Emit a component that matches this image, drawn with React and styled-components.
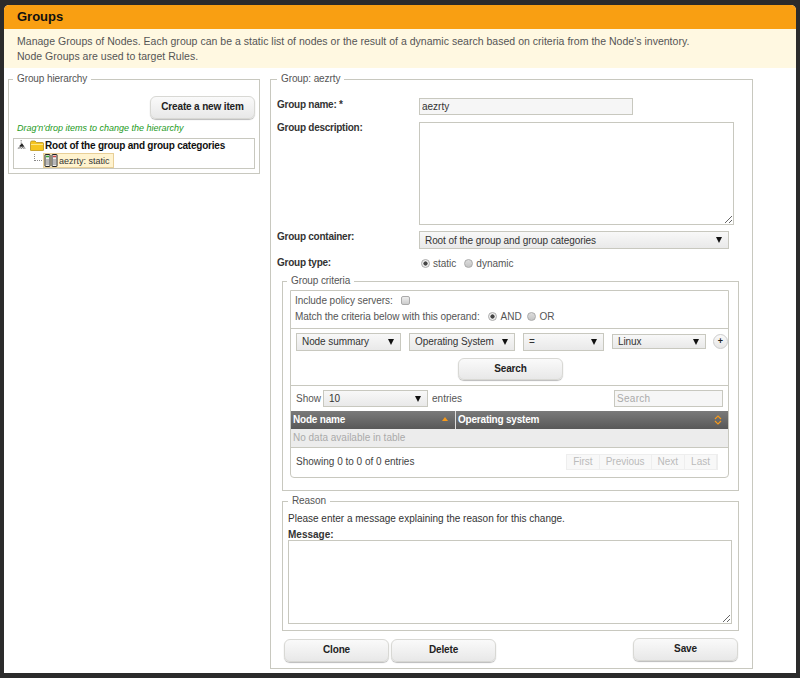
import React from "react";
import styled, { createGlobalStyle } from "styled-components";

const Global = createGlobalStyle`
  html, body { margin: 0; padding: 0; background: #2b2b2b; }
  body { font-family: "Liberation Sans", Arial, sans-serif; font-size: 11px; color: #333; }
  #root { width: 800px; height: 678px; overflow: hidden; }
  * { box-sizing: border-box; }
`;

const Panel = styled.div`
  position: relative; width: 792px; height: 668px; margin: 5px 4px; background: #fff;
  border-radius: 5px 5px 0 0; overflow: hidden;
`;
const Header = styled.h1`
  margin: 0; height: 24px; padding-left: 13px; background: #f99f12; color: #111;
  font-size: 13px; font-weight: bold; line-height: 23px;
`;
const Info = styled.div`
  height: 39px; padding: 5px 13px 0; background: #fff8e1; color: #555;
  font-size: 10.5px; line-height: 15px; letter-spacing: 0.02px;
`;
const Columns = styled.div`display: flex; align-items: flex-start; padding: 11px 0 0 4px;`;
const Fieldset = styled.section`
  position: relative; border: 1px solid #c8c8bf; width: ${p => p.$w}px; height: ${p => p.$h}px;
  margin: ${p => p.$m || 0};
`;
const Legend = styled.div`
  position: absolute; top: -8px; left: ${p => p.$left || 4}px; padding: 0 4px; background: #fff;
  color: #555; font-size: 10px; line-height: 14px; letter-spacing: -.1px;
`;
const Button = styled.button`
  display: block; width: ${p => p.$w || 105}px; height: ${p => p.$h || 23}px; padding: 0 0 2px;
  border: 1px solid #d8d8d4; border-radius: 6px; background: linear-gradient(#fafafa, #e8e8e8);
  box-shadow: 0 1px 1px #bbb; color: #222; font: bold 10px "Liberation Sans", Arial, sans-serif; letter-spacing: -.15px;
  margin: ${p => p.$m || 0};
`;
const Hint = styled.div`
  margin: 3px 0 0 8px; color: #1c9a1c; font-size: 9px; font-style: italic; line-height: 12px;
`;
const Tree = styled.div`
  position: relative; width: 242px; height: 31px; margin: 4px 0 0 4px; border: 1px solid #c8c8bf;
`;
const TreeRoot = styled.div`
  position: absolute; left: 3px; top: -1px; display: flex; align-items: center; height: 14px;
  font-weight: bold; font-size: 10px; letter-spacing: -.22px; color: #111; white-space: nowrap;
`;
const TreeChild = styled.div`
  position: absolute; left: 29px; top: 14px; height: 15px; width: 71px; display: flex; align-items: center;
  background: #fff3cf; border: 1px solid #e8cf98; color: #333; font-size: 9px; white-space: nowrap;
`;
const TreeLine = styled.div`
  position: absolute; left: 20px; top: 15px; width: 8px; height: 7px;
  border-left: 1px dotted #888; border-bottom: 1px dotted #888;
`;
const Row = styled.div`display: flex; height: ${p => p.$h}px; margin-top: ${p => p.$t || 0}px;`;
const Label = styled.label`
  width: 148px; padding-left: 6px; font-weight: bold; font-size: 10px; letter-spacing: -.25px; color: #333; line-height: 11px; padding-top: ${p => p.$pt || 0}px;
`;
const TextInput = styled.input`
  width: ${p => p.$w}px; height: ${p => p.$h || 17}px; padding: 0 2px; margin: ${p => p.$m || 0};
  border: 1px solid #c8c8bf; background: #f6f6f6; color: #333;
  font: 10px "Liberation Sans", Arial, sans-serif; outline: none;
  &::placeholder { color: #aaa; letter-spacing: .3px; }
`;
const TextArea = styled.textarea`
  display: block; width: ${p => p.$w}px; height: ${p => p.$h}px; margin: ${p => p.$m || 0}; padding: 2px;
  border: 1px solid #c8c8bf; background: #fff; outline: none;
`;
const Select = styled.div`
  display: flex; align-items: center; justify-content: space-between; flex: none;
  width: ${p => p.$w}px; height: ${p => p.$h || 18}px; padding: 0 6px 0 5px; margin: ${p => p.$m || 0};
  border: 1px solid #c8c8bf; background: linear-gradient(#f8f8f8, #e9e9e9);
  color: #333; font-size: 10px; letter-spacing: -.08px; white-space: nowrap;
  &::after { content: ""; border-left: 3px solid transparent; border-right: 3px solid transparent; border-top: 6px solid #111; }
`;
const RadioGroup = styled.div`display: flex; align-items: center; color: #555; font-size: 10px; height: ${p => p.$h || 14}px;`;
const Radio = styled.span`
  display: inline-block; width: 9px; height: 9px; border-radius: 50%; border: 1px solid #aaa; margin: ${p => p.$m || "0 3px 0 2px"};
  background: ${p => p.$on ? "radial-gradient(circle, #444 0 1.8px, #eee 2.4px)" : "linear-gradient(#ddd, #c4c4c4)"};
`;
const CriteriaBox = styled.div`
  width: 439px; height: 188px; margin: 8px 0 0 7px; border: 1px solid #c8c8bf; border-radius: 0 0 4px 4px;
`;
const TopOptions = styled.div`height: 38px; padding: 2px 0 0 4px; border-bottom: 1px solid #c8c8bf; color: #555; font-size: 10px; letter-spacing: -.05px;`;
const OptionLine = styled.div`display: flex; align-items: center; height: 14px; margin-bottom: 2px;`;
const Check = styled.span`display: inline-block; width: 9px; height: 9px; border: 1px solid #aaa; border-radius: 2px; background: linear-gradient(#eee, #ccc); margin-left: 8px;`;
const QueryRow = styled.div`display: flex; align-items: center; height: 21px; margin-top: 2px; padding-left: 5px;`;
const PlusButton = styled.div`
  width: 15px; height: 15px; margin-left: 7px; border: 1px solid #ccc; border-radius: 50%;
  background: linear-gradient(#fafafa, #e6e6e6); color: #222; font-size: 9px; font-weight: bold; line-height: 13px; text-align: center;
`;
const SearchBar = styled.div`height: 34px; border-bottom: 1px solid #c8c8bf; padding: 6px 0 0 167px;`;
const TableTools = styled.div`display: flex; align-items: center; height: 25px; padding: 0 5px; color: #555; font-size: 10px;`;
const TableHead = styled.div`
  display: flex; height: 18px; background: linear-gradient(#7a7a7a, #585858); color: #fff; font-weight: bold; font-size: 10px; letter-spacing: -.2px; line-height: 18px;
`;
const HeadCell = styled.div`
  position: relative; width: ${p => p.$w}px; padding-left: 2px; border-right: ${p => p.$div ? "1px solid #ddd" : "0"};
`;
const Sort = styled.svg`position: absolute; right: 6px; top: ${p => p.$top}px;`;
const EmptyRow = styled.div`height: 19px; background: #ececec; border-bottom: 1px solid #c8c8bf; color: #aaa; font-size: 10px; line-height: 18px; padding-left: 2px;`;
const TableFoot = styled.div`display: flex; justify-content: space-between; align-items: flex-start; padding: 6px 10px 0 5px; color: #444; font-size: 10px; line-height: 14px;`;
const FootInfo = styled.span`padding-top: 1px;`;
const Pager = styled.div`display: flex; height: 16px; border: 1px solid #eee; background: #f8f8f8;`;
const PageItem = styled.span`
  padding: 0 6px; line-height: 14px; color: #bbb; font-size: 10px; border-right: 1px solid #eee;
`;
const ReasonText = styled.div`padding: 10px 0 0 5px; height: 26px; color: #333; font-size: 10px; line-height: 14px;`;
const MessageLabel = styled.div`padding-left: 5px; font-weight: bold; font-size: 10px; color: #333; line-height: 14px; height: 12px;`;
const ActionRow = styled.div`display: flex; margin: 8px 0 0 13px;`;

const OpenNode = () => (
  <svg width="10" height="12" viewBox="0 0 12 12" style={{ marginRight: 3 }}>
    <path d="M5 0v8M2 9h8M1 10h10" stroke="#444" strokeWidth="1" strokeDasharray="1 1" fill="none" />
    <path d="M3 7l3-3 3 4H3z" fill="#222" />
  </svg>
);
const Folder = () => (
  <svg width="14" height="11" viewBox="0 0 14 11" style={{ marginRight: 1 }}>
    <path d="M.5 2.5Q.5 1 2 1h3l1.5 1.5h6q1 0 1 1V10q0 .7-.8.7H1.3Q.5 10.7.5 10z" fill="#f6c51e" stroke="#a98412" strokeWidth=".7" />
    <path d="M1 4h12v1H1z" fill="#ffe680" />
  </svg>
);
const NodeIcon = () => (
  <svg width="15" height="13" viewBox="0 0 15 13" style={{ flex: "none" }}>
    <rect x="1" y="0.5" width="5" height="12" rx=".5" fill="#eee" stroke="#222" strokeWidth="1" />
    <rect x="8" y="0.5" width="5" height="12" rx=".5" fill="#eee" stroke="#222" strokeWidth="1" />
    <path d="M2 2.5h3" stroke="#3a3" strokeWidth="1.6" />
    <path d="M9 2.5h3" stroke="#c44" strokeWidth="1.6" />
    <path d="M2 6h3M2 8h3M2 10h3M9 6h3M9 8h3M9 10h3" stroke="#666" strokeWidth=".8" />
  </svg>
);

export default function App() {
  return (
    <>
      <Global />
      <Panel>
        <Header>Groups</Header>
        <Info>
          Manage Groups of Nodes. Each group can be a static list of nodes or the result of a dynamic search based on criteria from the Node's inventory.
          <br />
          Node Groups are used to target Rules.
        </Info>
        <Columns>
          <Fieldset $w={252} $h={95}>
            <Legend>Group hierarchy</Legend>
            <Button $m="16px 0 0 141px">Create a new item</Button>
            <Hint>Drag'n'drop items to change the hierarchy</Hint>
            <Tree>
              <TreeRoot><OpenNode /><Folder />Root of the group and group categories</TreeRoot>
              <TreeLine />
              <TreeChild><NodeIcon />aezrty: static</TreeChild>
            </Tree>
          </Fieldset>
          <Fieldset $w={483} $h={590} $m="0 0 0 10px">
            <Legend $left={6}>Group: aezrty</Legend>
            <Row $h={24} $t={18}>
              <Label $pt={1}>Group name: *</Label>
              <TextInput $w={214} defaultValue="aezrty" />
            </Row>
            <Row $h={103}>
              <Label>Group description:</Label>
              <TextArea $w={315} $h={103} />
            </Row>
            <Row $h={19} $t={6}>
              <Label>Group container:</Label>
              <Select $w={310}>Root of the group and group categories</Select>
            </Row>
            <Row $h={14} $t={6}>
              <Label $pt={1}>Group type:</Label>
              <RadioGroup><Radio $on />static<Radio $m="0 3px 0 8px" />dynamic</RadioGroup>
            </Row>
            <Fieldset $w={457} $h={210} $m="11px 0 0 11px">
              <Legend>Group criteria</Legend>
              <CriteriaBox>
                <TopOptions>
                  <OptionLine>Include policy servers:<Check /></OptionLine>
                  <OptionLine>
                    Match the criteria below with this operand:<Radio $on $m="0 4px 0 8px" />AND<Radio $m="0 4px 0 5px" />OR
                  </OptionLine>
                </TopOptions>
                <QueryRow>
                  <Select $w={105}>Node summary</Select>
                  <Select $w={106} $m="0 0 0 8px">Operating System</Select>
                  <Select $w={81} $m="0 0 0 8px">=</Select>
                  <Select $w={94} $h={15} $m="0 0 0 8px">Linux</Select>
                  <PlusButton>+</PlusButton>
                </QueryRow>
                <SearchBar><Button $h={22}>Search</Button></SearchBar>
                <TableTools>
                  Show
                  <Select $w={105} $h={17} $m="0 4px 0 2px">10</Select>
                  entries
                  <TextInput $w={109} $h={17} $m="0 0 0 auto" placeholder="Search" />
                </TableTools>
                <TableHead>
                  <HeadCell $w={165} $div>Node name
                    <Sort $top={5} width="8" height="6" viewBox="0 0 8 6"><path d="M4 1l3 4H1z" fill="#f79a1a" /></Sort>
                  </HeadCell>
                  <HeadCell $w={272}>Operating system
                    <Sort $top={4} width="8" height="10" viewBox="0 0 8 10"><path d="M1 4l3-3 3 3M1 6l3 3 3-3" fill="none" stroke="#f79a1a" strokeWidth="1.2" /></Sort>
                  </HeadCell>
                </TableHead>
                <EmptyRow>No data available in table</EmptyRow>
                <TableFoot>
                  <FootInfo>Showing 0 to 0 of 0 entries</FootInfo>
                  <Pager>
                    <PageItem>First</PageItem><PageItem>Previous</PageItem><PageItem>Next</PageItem><PageItem>Last</PageItem>
                  </Pager>
                </TableFoot>
              </CriteriaBox>
            </Fieldset>
            <Fieldset $w={457} $h={130} $m="10px 0 0 11px">
              <Legend $left={5}>Reason</Legend>
              <ReasonText>Please enter a message explaining the reason for this change.</ReasonText>
              <MessageLabel>Message:</MessageLabel>
              <TextArea $w={444} $h={84} $m="0 0 0 5px" />
            </Fieldset>
            <ActionRow>
              <Button>Clone</Button>
              <Button $m="0 0 0 2px">Delete</Button>
              <Button $m="-1px 0 0 137px">Save</Button>
            </ActionRow>
          </Fieldset>
        </Columns>
      </Panel>
    </>
  );
}
